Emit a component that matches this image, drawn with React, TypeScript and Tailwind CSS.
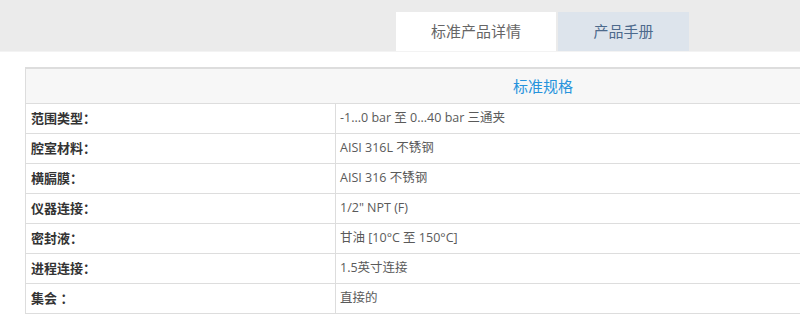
import React from "react";

const rows: [string, string][] = [
  ["范围类型：", "-1...0 bar 至 0...40 bar 三通夹"],
  ["腔室材料：", "AISI 316L 不锈钢"],
  ["横膈膜：", "AISI 316 不锈钢"],
  ["仪器连接：", "1/2\" NPT (F)"],
  ["密封液：", "甘油 [10°C 至 150°C]"],
  ["进程连接：", "1.5英寸连接"],
  ["集会 ：", "直接的"],
];

const font = { fontFamily: '"Open Sans", "Noto Sans CJK SC", sans-serif' };

export default function App() {
  return (
    <div className="w-[800px] h-[328px] overflow-hidden bg-white" style={font}>
      <div className="h-[52px] bg-[#ebebeb] border-b border-[#f3f3f3] flex items-end pl-[396px] gap-[2px]">
        <div className="w-[160px] h-[39px] bg-white flex items-center justify-center text-[15px] text-[#666]">
          标准产品详情
        </div>
        <div className="w-[131px] h-[39px] bg-[#dde4ec] flex items-center justify-center text-[15px] text-[#4d6a8c]">
          产品手册
        </div>
      </div>

      <div className="ml-[25px] mt-[15px] w-[1036px] border border-[#dddddd] border-t-2">
        <div className="h-[35px] bg-[#f7f7f7] border-b border-[#dddddd] flex items-center justify-center text-[15px] text-[#2793dc]">
          标准规格
        </div>
        {rows.map(([label, value], i) => (
          <div
            key={label}
            className={`flex ${i < rows.length - 1 ? "h-[30px] border-b border-[#dddddd]" : "h-[29px]"}`}
          >
            <div className="w-[310px] border-r border-[#dddddd] flex items-center pl-[5px] text-[13px] font-bold text-[#333]">
              {label}
            </div>
            <div className="flex-1 flex items-center pl-[4px] text-[12.5px] text-[#5a5a5a]">
              {value}
            </div>
          </div>
        ))}
      </div>
    </div>
  );
}
